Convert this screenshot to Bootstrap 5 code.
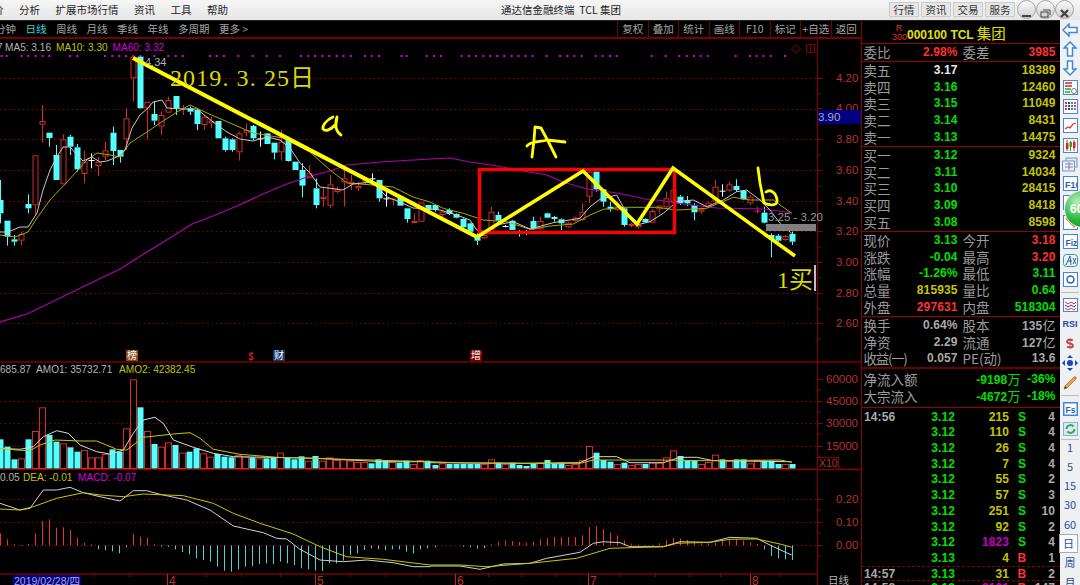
<!DOCTYPE html>
<html lang="zh">
<head>
<meta charset="utf-8">
<title>通达信金融终端 TCL 集团</title>
<link href="https://cdn.jsdelivr.net/npm/bootstrap@5.3.0/dist/css/bootstrap.min.css" rel="stylesheet">
<style>
html,body{margin:0;height:585px;width:1080px;overflow:hidden;background:#000}
body{font-family:"Liberation Sans","Noto Sans CJK SC",sans-serif;color:#a8a8a8}
.tdx-title{height:21px;background:linear-gradient(#f6f6f6,#e6e6e6);border-bottom:1px solid #222;color:#222;font-size:10.5px;line-height:20px;font-family:"Noto Sans CJK SC",sans-serif}
.tdx-menu{gap:15.5px;margin-left:-7px;flex:0 0 508px}
.tdx-wintitle{flex:0 0 388px}
.tdx-tbtn{width:30px;height:15px;margin:2px 2px 0 0;line-height:14px;text-align:center;background:#e6e6e6;border:1px solid #cacaca;color:#333;font-size:10.5px}
.tdx-circ{width:19px;height:19px;border-radius:50%;border:1px solid #a4a4a4;background:linear-gradient(#fafafa,#cfcfcf);margin-top:0;padding:1px}
.tdx-main{height:564px}
.tdx-chart{width:861px;flex:0 0 861px;background:#000}
.tdx-tool{height:18px;border-bottom:2px solid #7a0000;font-size:10.5px;line-height:16px;font-family:"Noto Sans CJK SC",sans-serif;color:#a4a4a4}
.tdx-left{gap:9.5px;margin-left:-5px}
.tdx-on{color:#2fd5d5}
.tdx-rbtn{width:30.5px;text-align:center;border-left:1px solid #7a0000;height:16px}
svg text{font-family:"Liberation Sans","Noto Sans CJK SC",sans-serif}
.ax{fill:#b53232;font-size:11.5px}
.lg{font-size:10.1px;fill:#b4b4b4}
.lgy{fill:#c2c200}.lgm{fill:#d400d4}
.hand{fill:#dada00;font-family:"Liberation Serif","Noto Sans CJK SC",serif !important}
.mk{fill:#fff;font-size:10px;font-family:"Noto Sans CJK SC",sans-serif !important}
.tdx-panel{width:199px;flex:0 0 199px;border-left:1px solid #8a0000;background:#000}
.tdx-sec{border-bottom:1px solid #9a0000}
.tdx-head{height:23px;padding-top:1px}
.tdx-r{display:grid;grid-template-columns:40px 54px 38px 1fr;height:16.8px;line-height:16.8px;padding:0 4.5px 0 1.5px;font-weight:700;font-size:12px;letter-spacing:.1px;white-space:nowrap}
.tdx-r>:nth-child(2),.tdx-r>:nth-child(4){text-align:right}
.tdx-r>:nth-child(3){padding-left:5px}
.tdx-l{font-weight:400;font-family:"Noto Sans CJK SC",sans-serif;font-size:13.5px;color:#9c9c9c;letter-spacing:0}
.tdx-tight{letter-spacing:-1.3px}
.tdx-unit{font-weight:400;font-family:"Noto Sans CJK SC",sans-serif;font-size:13px}
.g{color:#00e000}.rr{color:#ff3030}.y{color:#c4c400}.w{color:#e8e8e8}.s{color:#aaa}.m{color:#c000c0}
.tdx-flow{display:flex;height:16.8px;line-height:16.8px;padding-left:1.5px;white-space:nowrap;font-weight:700;font-size:12px;letter-spacing:.1px}
.tdx-t{display:grid;grid-template-columns:29px 62px 54px 20px 26px;height:15.7px;line-height:15.7px;padding-left:2px;font-weight:700;font-size:12px;letter-spacing:.1px}
.tdx-t>*:nth-child(n+2){text-align:right}
.tdx-t>*:nth-child(4){text-align:center;padding-left:6px}
.tdx-ticks{height:178px;overflow:hidden;padding-top:2px}
.tdx-bar{width:20px;flex:0 0 20px;background:#eff0f2;margin-top:-1px;height:565px;overflow:visible;position:relative}
.tb{height:19.25px;display:flex;align-items:center;justify-content:center;font-size:11px;color:#2d4f96;font-family:"Noto Sans CJK SC",sans-serif}
.tb svg{display:block}
.tbsep{height:1px;background:#bcbcbc;margin:2.5px 1px 2.5px}
.tbsep2{height:1px;background:#bcbcbc;margin:3px 1px 4px}
.tbsep3{height:1px;background:#bcbcbc;margin:1px 1px -3px}
.tbsel{background:#fafafa;border:1px solid #aaa;height:19.5px;margin:0 2px 0 -1px;box-sizing:border-box}
.tdx-ball{position:absolute;left:4px;top:170px;width:38px;height:38px;border-radius:50%;background:radial-gradient(circle at 35% 30%,#b8f0b8,#22b43a 55%,#138a2a);border:1px solid #e8e8e8;color:#fff;font:700 12px/36px "Liberation Sans",sans-serif;padding-left:5px}
</style>
</head>
<body>
<div class="tdx-title d-flex overflow-hidden">
  <div class="tdx-menu d-flex"><span>价</span><span>分析</span><span>扩展市场行情</span><span>资讯</span><span>工具</span><span>帮助</span></div>
  <div class="tdx-wintitle">通达信金融终端&nbsp;&nbsp;TCL 集团</div>
  <div class="d-flex">
    <div class="tdx-tbtn">行情</div><div class="tdx-tbtn">资讯</div><div class="tdx-tbtn">交易</div><div class="tdx-tbtn">服务</div>
    <div class="tdx-circ"><svg width="15" height="15" viewBox="0 0 15 15"><path d="M3 10h9" stroke="#444" stroke-width="2"/></svg></div>
    <div class="tdx-circ"><svg width="15" height="15" viewBox="0 0 15 15" fill="none" stroke="#444"><rect x="3" y="6" width="7" height="5"/><path d="M5 4h7v5"/></svg></div>
    <div class="tdx-circ"><svg width="15" height="15" viewBox="0 0 15 15"><path d="M4 4l7 7M11 4l-7 7" stroke="#444" stroke-width="2.4"/></svg></div>
  </div>
</div>
<div class="tdx-main d-flex">
  <div class="tdx-chart">
    <div class="tdx-tool d-flex justify-content-between">
      <div class="tdx-left d-flex"><span>分钟</span><span class="tdx-on">日线</span><span>周线</span><span>月线</span><span>季线</span><span>年线</span><span>多周期</span><span>更多 &gt;</span></div>
      <div class="d-flex"><div class="tdx-rbtn">复权</div><div class="tdx-rbtn">叠加</div><div class="tdx-rbtn">统计</div><div class="tdx-rbtn">画线</div><div class="tdx-rbtn">F10</div><div class="tdx-rbtn">标记</div><div class="tdx-rbtn">+自选</div><div class="tdx-rbtn">返回</div></div>
    </div>
    <svg id="cv" width="861" height="546" viewBox="0 39 861 546" class="d-block"></svg>
  </div>
  <div class="tdx-panel overflow-hidden">
    <div class="tdx-sec tdx-head d-flex">
      <div class="text-center rr" style="width:32px;margin-left:12px;font-size:9px;line-height:9px;padding-top:2px;padding-left:18px;color:#e03030">R<br>300</div>
      <div class="y" style="font-weight:700;font-size:12px;line-height:22px;color:#e0e000;padding-left:1px;white-space:nowrap">000100 TCL <span style="font-weight:400;font-size:14.5px;font-family:'Noto Sans CJK SC',sans-serif">集团</span></div>
    </div>
    <div class="tdx-sec" id="s1"></div>
    <div class="tdx-sec" id="s2"></div>
    <div class="tdx-sec" id="s3"></div>
    <div class="tdx-sec" id="s4"></div>
    <div class="tdx-sec" id="s5" style="border-bottom-width:2px;border-bottom-color:#6a0000"></div>
    <div class="tdx-sec" id="s6" style="padding:2px 0 2px"></div>
    <div class="tdx-ticks" id="s7"></div>
  </div>
  <div class="tdx-bar">
    <div class="tb"><svg width="16" height="14" viewBox="0 0 16 14"><path d="M7 1 1 7l6 6V9.500h8v-5H7z" fill="#fff" stroke="#3d86dd" stroke-width="1.500"/></svg></div>
    <div class="tb"><svg width="14" height="16" viewBox="0 0 14 16"><path d="M7 1 1 7h3.500v8h5V7H13z" fill="#fff" stroke="#3d86dd" stroke-width="1.500"/></svg></div>
    <div class="tb"><svg width="14" height="16" viewBox="0 0 14 16"><path d="M7 15 1 9h3.500V1h5v8H13z" fill="#fff" stroke="#3d86dd" stroke-width="1.500"/></svg></div>
    <div class="tb"><svg width="15" height="15" viewBox="0 0 15 15"><rect x=".5" y=".5" width="14" height="14" fill="#fff" stroke="#4a88d0"/><path d="M2 3h7M2 6h7" stroke="#d22" stroke-width="1.500"/><path d="M2 9h6M2 12h5" stroke="#2a2" stroke-width="1.500"/><circle cx="11" cy="11" r="2.500" fill="none" stroke="#777"/></svg></div>
    <div class="tb"><svg width="15" height="15" viewBox="0 0 15 15"><rect x=".5" y=".5" width="14" height="14" fill="#fff" stroke="#4a88d0"/><path d="M3 3v9" stroke="#d33" stroke-width="2" stroke-dasharray="2 1"/><path d="M6 3v9" stroke="#33b" stroke-width="2" stroke-dasharray="2 1"/><path d="M9 3v9" stroke="#3a3" stroke-width="2" stroke-dasharray="2 1"/><path d="M12 3v9" stroke="#c4c" stroke-width="2" stroke-dasharray="2 1"/></svg></div>
    <div class="tb"><svg width="15" height="15" viewBox="0 0 15 15"><rect x=".5" y=".5" width="14" height="14" fill="#fff" stroke="#4a88d0"/><path d="M2 11 5 9l2 1 3-4 3-1" fill="none" stroke="#e33" stroke-width="1.300"/></svg></div>
    <div class="tb"><svg width="15" height="15" viewBox="0 0 15 15"><rect x=".5" y=".5" width="14" height="14" fill="#fff" stroke="#4a88d0"/><path d="M4 2v11M11 2v11" stroke="#d22"/><rect x="3" y="5" width="2.500" height="6" fill="#d22"/><path d="M7.500 3v10" stroke="#2a2"/><rect x="6.500" y="4" width="2.500" height="5" fill="#2a2"/><rect x="10" y="4" width="2.500" height="6" fill="#d22"/></svg></div>
    <div class="tb"><svg width="16" height="15" viewBox="0 0 16 15"><rect x="4" y="1" width="11" height="9" fill="#dfe8f4" stroke="#6d9ad0"/><rect x=".5" y="4" width="12" height="10" fill="#eef" stroke="#6d9ad0"/><path d="M3 7h8M3 10h8M7 5v8" stroke="#8a8a8a"/></svg></div>
    <div class="tb"><svg width="15" height="15" viewBox="0 0 15 15"><rect x=".5" y=".5" width="14" height="14" fill="#fff" stroke="#3d86dd"/><text x="2" y="11.500" font-size="9" font-weight="700" fill="#2d5fb0">F10</text></svg></div>
    <div class="tb"><svg width="15" height="15" viewBox="0 0 15 15"><rect x=".5" y=".5" width="14" height="14" fill="#fff" stroke="#3d86dd"/><path d="M3 12 12 3" stroke="#d77a1a" stroke-width="2"/></svg></div>
    <div class="tb"><svg width="15" height="15" viewBox="0 0 15 15"><rect x=".5" y=".5" width="14" height="14" fill="#fff" stroke="#3d86dd"/><path d="M3 3l9 9" stroke="#d77a1a" stroke-width="2"/></svg></div>
    <div class="tb"><svg width="15" height="15" viewBox="0 0 15 15"><rect x=".5" y=".5" width="14" height="14" fill="#fff" stroke="#3d86dd"/><text x="2.500" y="11.500" font-size="8.500" font-weight="700" fill="#2d5fb0">Fiz</text></svg></div>
    <div class="tb"><svg width="15" height="15" viewBox="0 0 15 15"><rect x=".5" y="1.500" width="14" height="12" rx="3" fill="#e7f4f0" stroke="#3a9a98"/><path d="M3 12 7 3l1 9M5 8h4M10 5l3 6M13 5l-3 6" fill="none" stroke="#2d5fb0"/></svg></div>
    <div class="tb"><svg width="15" height="15" viewBox="0 0 15 15"><rect x=".5" y=".5" width="14" height="14" fill="#fff" stroke="#3d86dd"/><circle cx="7.500" cy="7.500" r="3.500" fill="none" stroke="#2d5fb0" stroke-width="1.500"/></svg></div>
    <div class="tbsep"></div>
    <div class="tb"><svg width="15" height="14" viewBox="0 0 15 14"><rect x=".5" y=".5" width="14" height="13" fill="#fff" stroke="#4a88d0"/><path d="M2 4l3 2 3-2 3 2 2-2" fill="none" stroke="#d33"/><path d="M2 7l3 2 3-2 3 2 2-2" fill="none" stroke="#33b"/><path d="M2 10l3 2 3-2 3 2 2-2" fill="none" stroke="#d33"/></svg></div>
    <div class="tb" style="font:700 9px 'Liberation Sans',sans-serif;color:#2448b0">RSI</div>
    <div class="tb"><svg width="10" height="15" viewBox="0 0 14 16"><path d="M11 4C9 2 3 2 3 5.500 3 9 11 7 11 11c0 3-6 3-8 1" fill="none" stroke="#bc4a4a" stroke-width="2.800"/><path d="M7 0v16" stroke="#bc4a4a"/></svg></div>
    <div class="tb"><svg width="16" height="16" viewBox="0 0 16 16" fill="#1746c4"><circle cx="8" cy="8" r="3"/><path d="M8 0l3 3H5zM8 16l3-3H5zM0 8l3-3v6zM16 8l-3-3v6z"/></svg></div>
    <div class="tb"><svg width="16" height="16" viewBox="0 0 16 16"><path d="M3 12 12 3l2 2-9 9-3 1z" fill="#e6a23c" stroke="#9a6a20" stroke-width=".6"/><path d="M12 3l2 2 1-1-2-2z" fill="#d66"/><path d="M2 15l1-3 2 2z" fill="#444"/></svg></div>
    <div class="tbsep2"></div>
    <div class="tb"><svg width="15" height="14" viewBox="0 0 15 14"><rect x=".75" y=".75" width="13.500" height="12.500" fill="#fff" stroke="#3d86dd" stroke-width="1.500"/><text x="2.500" y="10.500" font-size="8.500" font-weight="700" fill="#2d5fb0">Fs</text></svg></div>
    <div class="tb"><svg width="15" height="14" viewBox="0 0 15 14"><rect x=".5" y=".5" width="14" height="13" fill="#d9e8f6" stroke="#8ab0d8"/><path d="M3.500 7a4 4 0 0 1 7-2.500M11.500 7a4 4 0 0 1-7 2.500" fill="none" stroke="#3fa83f" stroke-width="2"/></svg></div>
    <div class="tbsep3"></div>
    <div class="tb">1</div><div class="tb">5</div><div class="tb">15</div><div class="tb">30</div><div class="tb">60</div>
    <div class="tb tbsel">日</div><div class="tb">周</div><div class="tb">月</div>
    <div class="tdx-ball">60</div>
  </div>
</div>
<script>
const $=id=>document.getElementById(id);
const unit=v=>String(v).replace(/([亿万])/,'<span class="tdx-unit">$1</span>');
const row=(a,av,ac,b,bv,bc)=>`<div class="tdx-r"><span class="tdx-l ${a.length>3?'tdx-tight':''}">${a}</span><span class="${ac}">${av}</span><span class="tdx-l">${b||''}</span><span class="${bc||''}">${unit(bv||'')}</span></div>`;
$('s1').innerHTML=row('委比','2.98%','rr','委差','3985','rr');
const sell=[['卖五','3.17','w','18389'],['卖四','3.16','g','12460'],['卖三','3.15','g','11049'],['卖二','3.14','g','8431'],['卖一','3.13','g','14475']];
const buy=[['买一','3.12','g','9324'],['买二','3.11','g','14034'],['买三','3.10','g','28415'],['买四','3.09','g','8418'],['买五','3.08','g','8598']];
const pr=(l,p,c,v)=>row(l,p,c,'',v,'y');
$('s2').innerHTML=sell.map(x=>pr(...x)).join('');
$('s3').innerHTML=buy.map(x=>pr(...x)).join('');
$('s4').innerHTML=[['现价','3.13','g','今开','3.18','rr'],['涨跌','-0.04','g','最高','3.20','rr'],['涨幅','-1.26%','g','最低','3.11','g'],['总量','815935','y','量比','0.64','g'],['外盘','297631','rr','内盘','518304','g']].map(x=>row(...x)).join('');
$('s5').innerHTML=[['换手','0.64%','s','股本','135亿','s'],['净资','2.29','s','流通','127亿','s'],['收益(一)','0.057','s','PE(动)','13.6','s']].map(x=>row(...x)).join('');
$('s6').innerHTML=[['净流入额','-9198万','-36%'],['大宗流入','-4672万','-18%']].map(x=>`<div class="tdx-flow"><span class="tdx-l flex-shrink-0" style="width:90px">${x[0]}</span><span class="g text-end" style="width:67px">${unit(x[1])}</span><span class="g text-end" style="width:35px">${x[2]}</span></div>`).join('');
const tk=[['14:56','3.12','215','S','4'],['','3.12','110','S','4'],['','3.12','26','S','4'],['','3.12','7','S','4'],['','3.12','55','S','2'],['','3.12','57','S','3'],['','3.12','251','S','10'],['','3.12','92','S','2'],['','3.12','1823','S','4'],['','3.13','4','B','1'],['14:57','3.13','31','B','2'],['14:58','3.13','2161','B','147']];
$('s7').innerHTML=tk.map((t,i)=>`<div class="tdx-t" ${i>=10?'style="border-top:1px dashed #8a0000;margin-top:-1px"':''}><span class="s">${t[0]}</span><span class="g">${t[1]}</span><span class="${t[2]=='1823'||t[2]=='2161'?'m':'y'}">${t[2]}</span><span class="${t[3]=='S'?'g':'rr'}">${t[3]}</span><span class="s">${t[4]}</span></div>`).join('');

/* chart */
let h='';
const CY='#54ffff',CR='#d42a2a';
const line=(x1,y1,x2,y2,c,extra='')=>`<line x1="${x1}" y1="${y1}" x2="${x2}" y2="${y2}" stroke="${c}" ${extra}/>`;
const text=(x,y,s,cls,extra='')=>`<text x="${x}" y="${y}" class="${cls}" ${extra}>${s}</text>`;
const poly=(p,c,w=1)=>`<polyline fill="none" stroke="${c}" stroke-width="${w}" points="${p}"/>`;
[78.5,109.5,139.5,170.5,201.5,231.5,262.5,293.5,323.5,401.5,423.5,446.5,499.5,522.5,545.5].forEach(y=>h+=line(0,y,817,y,'#8a0000','stroke-dasharray="1.500 3"'));
h+=line(0,362,861,362,'#7a0000','stroke-width="1.500"')+line(0,469.5,861,469.5,'#8a0000','stroke-width="1.500"')+line(0,574,817,574,'#7a0000','stroke-width="1.500"');
h+=line(817.5,39,817.5,585,'#8a0000');
[[78,'4.20'],[108,'4.00'],[139,'3.80'],[170,'3.60'],[201,'3.40'],[231,'3.20'],[262,'3.00'],[293,'2.80'],[323,'2.60']].forEach(a=>h+=text(836,a[0]+4,a[1],'ax')+line(817,a[0]+.5,823,a[0]+.5,'#8a0000')+line(817,a[0]+16,821,a[0]+16,'#8a0000'));
[[379,'60000'],[401,'45000'],[423,'30000'],[446,'15000']].forEach(a=>h+=text(826,a[0]+4,a[1],'ax')+line(817,a[0]+.5,823,a[0]+.5,'#8a0000')+line(817,a[0]+11,821,a[0]+11,'#8a0000'));
[[499,'0.20'],[522,'0.10'],[545,'0.00']].forEach(a=>h+=text(836,a[0]+4,a[1],'ax')+line(817,a[0]+.5,823,a[0]+.5,'#8a0000')+line(817,a[0]+11,821,a[0]+11,'#8a0000'));
h+=`<rect x="817.500" y="457.500" width="21" height="12" fill="#000" stroke="#8a0000"/>`+text(819,467,'X10','ax','style="font-size:10.500px"');
h+=`<rect x="818" y="110" width="43" height="14" fill="#000080"/>`+text(818,121,'3.90','lg','style="font-size:11.500px;fill:#aaa"');

/* dots */
[5,20,65,85,107,128,148,210,232,315,337,358,378,400,421,463,505,527,548,630,650,672,715,758,800,840,903,925,945,967,988,1010,1030,1052,1095,1115,1137].forEach(z=>h+=`<rect x="${z/3-1}" y="55" width="2" height="2" fill="#d800d8"/>`);
[5,20,80,102,123,185,207,228,250,271,292,313,335,355,377,398,440,480,502,523,545,587,608,630,650,755,797,838,860,882,902,923,1007,1050,1070,1090,1112,1155].forEach(z=>h+=`<rect x="${400+z/3-1}" y="55" width="2" height="2" fill="#d800d8"/>`);
h+=text(-3,51,'7','lg')+text(5,51,'MA5: 3.16','lg')+text(56,51,'MA10: 3.30','lg lgy')+text(112.5,51,'MA60: 3.32','lg lgm');
h+=`<path d="M796 44.500 800.500 49 796 53.500 791.500 49z" fill="none" stroke="#8a0000"/><rect x="806.500" y="44.500" width="8" height="8" fill="none" stroke="#8a0000"/><path d="M810.500 44.500v8" stroke="#8a0000"/>`;

/* candles */
const drawC=(x,t,wt,bt,bb,wb)=>{
  const c=t=='c'?CY:t=='w'?'#fff':CR; x=Math.round(x);
  if(t=='w'||t=='x'){return line(x+.5,wt,x+.5,wb,c)+line(x-2.5,bt+.5,x+3.5,bt+.5,c);}
  let o=line(x+.5,wt,x+.5,bt,c)+line(x+.5,bb,x+.5,wb,c);
  if(t=='c') o+=`<rect x="${x-2.500}" y="${bt}" width="6" height="${Math.max(bb-bt,1)}" fill="${c}"/>`;
  else o+=`<rect x="${x-2}" y="${bt+.5}" width="5" height="${Math.max(bb-bt-1,1)}" fill="#000" stroke="${c}"/>`;
  return o;
};
const A=[[0,'c',240,300,340,370],[22,'c',362,362,410,437],[43,'c',405,418,425,437],[64,'r',395,402,422,437],[85,'c',283,312,325,340],[106,'r',166,166,316,345],[127,'r',15,63,74,128],[148,'c',98,98,114,140],[169,'c',135,165,240,240],[190,'r',103,118,253,253],[211,'c',105,110,140,165],[232,'c',132,142,208,215],[253,'r',152,185,222,250],[274,'w',160,180,180,205],[295,'r',170,185,198,228],[316,'r',125,151,170,180],[338,'c',80,98,153,195],[359,'c',150,150,170,188],[379,'r',25,55,118,150]].map(a=>[a[0],a[1],a[2]+300,a[3]+300,a[4]+300,a[5]+300]);
const B=[[400,'r',170,170,235,305],[421,'c',170,170,325,325],[442,'r',305,305,325,418],[463,'c',305,342,362,375],[484,'r',335,345,380,405],[505,'r',290,300,338,340],[527,'c',288,288,325,345],[548,'x',315,326,326,345],[569,'c',320,325,335,345],[590,'c',330,330,372,390],[611,'r',345,350,375,390],[632,'r',350,362,370,385],[653,'c',363,363,415,415],[674,'c',410,415,450,455],[695,'c',415,418,450,455],[716,'r',395,400,457,482],[737,'r',370,390,398,410],[758,'c',375,378,415,420],[779,'w',395,415,415,440],[800,'c',400,400,432,432],[821,'c',428,428,458,478],[842,'r',390,425,457,482],[863,'c',410,420,483,485],[884,'c',485,485,510,510],[905,'c',490,510,557,592],[926,'r',495,520,535,535],[947,'c',535,565,615,625],[968,'r',560,590,597,620],[989,'r',525,553,617,625],[1010,'r',560,568,576,580],[1031,'r',500,535,547,620],[1052,'r',525,545,553,570],[1073,'r',545,558,565,573],[1094,'r',535,540,547,555],[1115,'w',520,535,535,555],[1136,'c',540,540,595,605],[1157,'w',570,595,595,620],[1178,'x',595,596,596,615],[1199,'c',590,590,617,617],[1220,'c',625,625,657,668],[1241,'r',640,663,668,668],[1262,'r',607,607,665,665],[1283,'c',615,615,630,630]];
A.concat(B).forEach(a=>h+=drawC(a[0]/3,a[1],a[2]/3,a[3]/3,a[4]/3,a[5]/3));
const C=[[15,'c',165,165,180,185],[36,'r',180,185,195,205],[57,'c',175,180,192,195],[78,'c',190,192,203,205],[99,'c',205,207,232,235],[120,'c',218,220,245,250],[141,'c',250,255,272,285],[162,'r',250,255,265,268],[183,'r',170,185,240,240],[204,'c',185,195,212,222],[225,'w',225,228,228,232],[246,'c',210,212,240,240],[267,'c',240,245,245,260],[288,'c',240,245,245,255],[309,'c',200,213,238,240],[330,'r',200,213,238,240],[351,'c',188,190,203,205],[372,'c',198,201,207,215],[393,'c',205,208,220,240],[414,'r',215,218,232,235],[435,'r',200,203,213,215],[456,'r',160,185,210,212],[477,'r',60,65,140,160],[498,'c',65,65,118,125],[519,'c',118,118,155,170],[540,'c',155,170,178,185],[561,'r',165,170,180,182],[582,'c',172,175,225,230],[603,'r',218,222,228,232],[624,'r',215,225,232,236],[645,'c',205,207,217,218],[666,'r',178,183,218,220],[687,'r',165,167,178,190],[708,'r',125,145,172,178],[729,'r',118,120,155,160],[750,'c',135,140,160,165],[771,'c',138,150,160,168],[792,'c',160,165,187,211],[813,'r',172,178,185,192],[834,'r',155,158,170,172],[855,'r',90,110,155,160],[876,'w',103,122,122,140],[897,'r',95,103,122,125],[918,'c',88,108,120,125],[939,'c',120,122,148,150],[960,'r',135,140,160,165],[981,'x',170,182,182,190],[1002,'c',170,188,218,220],[1023,'c',250,255,268,322],[1044,'c',252,257,272,275],[1065,'r',255,258,270,272],[1086,'c',245,252,275,285]];
C.forEach(a=>h+=drawC(430+a[0]/3,a[1],150+a[2]/3,150+a[3]/3,150+a[4]/3,150+a[5]/3));

/* MAs */
h+=poly('0,322 27,314 60,298 93,282 120,269 147,252 170,238 192,224 213,216 237,206 263,194 287,184 307,177 330,171 347,165 380,162 430,159 450,158 470,162 497,166 523,171 547,175 563,182 587,189 617,193 650,200 657,200 683,204 717,208 763,209 792,213','#b000b0',1.2);
const z8=s=>s.map(p=>[430+p[0]/3,150+p[1]/3].map(v=>v.toFixed(1)).join(',')).join(' ');
h+=poly('0,235 15,237 28,232 37,218 50,200 67,182 87,160 97,153 110,155 120,157 130,143 147,132 160,123 177,112 190,105 207,113 230,123 253,133 283,138 310,152 330,170 347,183 373,185 393,187 413,197 430,202 '+z8([[40,175],[100,190],[160,210],[230,215],[300,238],[360,228],[430,222],[480,195],[520,178],[580,172],[680,172],[740,180],[830,175],[910,142],[960,150],[1030,150],[1085,190]]),'#a8a800');
h+=poly('0,232 8,232 20,227 28,227 37,213 43,190 50,170 58,155 63,147 70,147 77,155 83,161 92,157 100,162 107,161 117,157 125,150 132,128 140,115 148,108 153,102 162,100 167,108 182,109 197,109 213,122 227,132 240,139 253,141 267,137 280,140 290,148 300,163 310,173 320,187 328,188 343,190 353,184 372,182 387,197 400,202 413,208 430,209 '+z8([[30,180],[80,195],[120,210],[140,240],[165,245],[200,225],[250,215],[300,237],[370,218],[450,205],[480,170],[510,148],[560,135],[590,190],[620,225],[660,215],[700,190],[740,155],[790,150],[830,170],[880,150],[920,125],[950,120],[990,150],[1020,180],[1050,220],[1085,250]]),'#c8c8c8');

/* markers */
[[126,12,'#8a4a14','榜',358],[273,12,'#10386a','财',358],[470,12,'#800000','增',358]].forEach(m=>{h+=`<rect x="${m[0]}" y="350" width="${m[1]}" height="11" fill="${m[2]}"/>`+text(m[0]+1,m[4]+1,m[3],'mk')});
h+=text(248,360,'$','mk','style="fill:#e02020;font-weight:700"');

/* volume */
const volT=[298,320,358,355,298,273,202,285,305,310,322,335,330,352,352,342,328,335,265,118,202,273,312,320,307,315,338,335,325,340,350,342,350,352,345,350,352,355,355,352,338,352,358,349,362,348,362,352,360,358,362,366,366,370,358,362,366,368,362,372,360,362];
const redIdx=new Set([3,5,6,9,12,13,14,15,18,19,21,23,24,26,29,30,34,35,37,40,44,46,47,48,49,50,51,52,56,59,60]);
const bar=(x,top,red)=>red?`<rect x="${x-2.500}" y="${top+.5}" width="6" height="${468-top}" fill="none" stroke="${CR}"/>`:`<rect x="${x-2.500}" y="${top}" width="6" height="${468.500-top}" fill="${CY}"/>`;
volT.forEach((t,i)=>h+=bar(Math.round(7*i),340+t/3,redIdx.has(i)));
const vol2=[['c',375],['r',370],['c',372],['c',372],['c',372],['c',372],['c',372],['r',372],['r',358],['c',368],['r',372],['c',368],['c',375],['c',378],['c',372],['r',368],['c',360],['c',370],['c',368],['r',375],['r',372],['r',360],['r',318],['c',338],['c',360],['c',365],['r',372],['c',368],['r',375],['r',372],['c',372],['r',368],['r',368],['r',352],['r',331],['c',348],['c',362],['c',362],['r',372],['r',366],['r',344],['c',358],['r',362],['c',358],['c',358],['r',370],['r',360],['c',362],['c',362],['c',372],['r',372],['c',372]];
vol2.forEach((v,i)=>h+=bar(Math.round(430+(15+21*i)/3),340+v[1]/3,v[0]=='r'));
const z6=s=>s.map(p=>[(p[0]/3).toFixed(1),(340+p[1]/3).toFixed(1)].join(',')).join(' ');
const z7=s=>s.map(p=>[(430+p[0]/3).toFixed(1),(340+p[1]/3).toFixed(1)].join(',')).join(' ');
h+=poly(z6([[0,325],[60,328],[100,320],[130,290],[170,272],[205,280],[240,315],[290,335],[330,342],[370,330],[400,280],[430,240],[465,232],[490,250],[520,300],[580,322],[640,340],[700,350],[800,352],[950,355],[1150,365],[1290,365]])+' '+z7([[0,368],[280,370],[450,368],[490,350],[560,350],[600,368],[700,368],[750,352],[800,352],[850,362],[1085,365]]),'#d8d8d8');
h+=poly(z6([[0,325],[50,330],[90,332],[120,315],[165,300],[240,303],[290,303],[350,328],[380,330],[430,292],[520,282],[570,278],[600,295],[640,328],[720,343],[830,352],[1000,357],[1290,365]])+' '+z7([[0,365],[100,369],[280,370],[450,370],[490,360],[680,360],[830,362],[1050,360],[1085,367]]),'#c8c800');
h+=text(0,373,'685.87','lg')+text(36,373,'AMO1: 35732.71','lg')+text(119,373,'AMO2: 42382.45','lg lgy');
h+=text(0,481,'0.05','lg')+text(23,481,'DEA: -0.01','lg lgy')+text(78,481,'MACD: -0.07','lg lgm');

/* macd */
const s1=[580,598,612,618,612,580,543,538,563,562,570,593,608,613,628,630,634,640,622,582,590,593,612,620,621,628,636,643,655,660,665,680,692,695,688,680,678,672,670,672,665,670,675,685,688,692,693,670,670,662,645,640,630,625,628,630,628,628,635,640,628,625];
const s2=[622,617,0,0,620,622,626,624,613,606,601,603,606,609,605,598,594,591,591,591,591,586,561,558,567,577,586,601,611,613,618,618,610,601,593,596,600,608,610,610,608,603,600,598,602,608,612,628,648,655,658,660];
const stick=(x,z)=>{if(!z)return'';const c=z<615?'#e83030':'#4fcfd8';return line(x+.5,545.5,x+.5,340+z/3,c)};
s1.forEach((z,i)=>h+=stick(Math.round(7*i),z));
s2.forEach((z,i)=>h+=stick(Math.round(430+(15+21*i)/3),z));
h+=poly(z6([[0,490],[60,510],[90,505],[130,450],[170,450],[210,442],[250,458],[300,470],[360,483],[400,452],[440,452],[480,463],[560,480],[630,510],[700,558],[790,578],[830,595],[860,597],[900,628],[960,660],[1030,665],[1100,660],[1180,668],[1240,680],[1290,680]])+' '+z7([[0,678],[90,678],[150,688],[220,672],[300,670],[350,655],[450,637],[490,610],[520,605],[570,608],[600,620],[700,620],[750,605],[840,607],[900,592],[980,595],[1030,620],[1085,645]]),'#d0d0d0');
h+=poly(z6([[0,507],[60,510],[100,500],[170,475],[250,458],[300,465],[370,470],[430,462],[550,467],[640,490],[700,520],[780,550],[880,582],[960,620],[1040,650],[1150,658],[1290,675]])+' '+z7([[0,675],[90,675],[170,680],[300,670],[440,655],[540,625],[700,620],[740,610],[840,607],[900,598],[980,597],[1050,612],[1085,622]]),'#c8c800');

/* date axis */
h+=`<rect x="13" y="575" width="68" height="11" fill="#000080"/>`+text(14,584.5,'2019/02/28/四','lg','style="font-size:10.500px;fill:#a8a8e0"');
[[167,'4'],[315,'5'],[455,'6'],[588,'7'],[750,'8']].forEach(a=>h+=line(a[0]+.5,574,a[0]+.5,585,'#c02020')+text(a[0]+2,585,a[1],'ax','style="font-size:12px"'));
[38,94,130,205,241,280,350,385,420,488,522,555,620,655,690,720,780].forEach(x=>h+=line(x+.5,574,x+.5,577,'#8a0000'));
h+=text(828,584,'日线','lg','style="font-family:Noto Sans CJK SC;font-size:10.500px"');

/* drawings */
h+=`<rect x="479.500" y="169.500" width="195" height="63" fill="none" stroke="#f00" stroke-width="3.400"/>`;
h+=poly('133,58 477,237','#ffff00',4.2)+poly('477,237 583,171 637,224 673,168 795,256','#ffff00',3.6);
const hp=d=>`<path d="${d}" fill="none" stroke="#ffff00" stroke-width="2.800" stroke-linecap="round" stroke-linejoin="round"/>`;
h+=hp('M333 117C326 120 322 126 323 129C325 132 331 130 336 124L337 117C335 124 335 131 341 135');
h+=hp('M532 157L534 140L535 127L541 128L549 143L556 157M527 146C530 141 540 142 547 140L565 142');
h+=hp('M758 168L760 183L764 203C768 205 778 207 777 200C776 192 770 189 766 192');
h+=`<rect x="766" y="224" width="50" height="7" fill="#808080"/>`+text(768,221,'3.25 - 3.20','lg','style="fill:#9a9a9a;font-size:11.500px"');
h+=text(145,66,'4.34','lg','style="font-size:11px;fill:#b0b0b0"');
h+=text(170,86,'2019. 3. 25日','hand','style="font-size:24px;letter-spacing:1.100px"');
h+=text(777,288,'1买','hand','style="font-size:24px"');
h+=line(815,265,815,291,'#fff','stroke-width="1.500"');
$('cv').innerHTML=h;
</script>
<script src="https://cdn.jsdelivr.net/npm/bootstrap@5.3.0/dist/js/bootstrap.bundle.min.js"></script>
</body>
</html>
